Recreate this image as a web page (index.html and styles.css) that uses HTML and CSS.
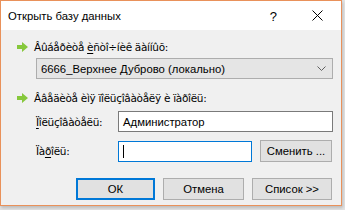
FILE: index.html
```html
<!DOCTYPE html>
<html>
<head>
<meta charset="utf-8">
<link rel="stylesheet" href="styles.css">
</head>
<body>
<div class="window">
  <div class="titlebar">
    <span class="title">Открыть базу данных</span>
    <span class="help">?</span>
    <svg class="close" width="11" height="11" viewBox="0 0 11 11"><path d="M0.5 0.5 L10.5 10.5 M10.5 0.5 L0.5 10.5" stroke="#000" stroke-width="1" fill="none"/></svg>
  </div>
  <div class="content">
    <div class="heading">
      <svg class="arrow" width="11" height="10" viewBox="0 0 11 10"><path d="M0 3 H5 V0 L11 5 L5 10 V7 H0 Z" fill="#86c83c"/></svg>
      <span class="lbl">Âûáåðèòå <u>è</u>ñòî÷íèê äàííûõ:</span>
    </div>
    <div class="combo">
      <span class="combo-text">6666_Верхнее Дуброво (локально)</span>
      <svg class="chev" width="9" height="5" viewBox="0 0 9 5"><path d="M0.5 0.5 L4.5 4.5 L8.5 0.5" stroke="#606060" fill="none"/></svg>
    </div>
    <div class="heading heading2">
      <svg class="arrow" width="11" height="10" viewBox="0 0 11 10"><path d="M0 3 H5 V0 L11 5 L5 10 V7 H0 Z" fill="#86c83c"/></svg>
      <span class="lbl">Ââåäèòå èìÿ ïîëüçîâàòåëÿ è ïàðîëü:</span>
    </div>
    <div class="row row-user">
      <span class="lbl field-lbl"><u>Ï</u>îëüçîâàòåëü:</span>
      <div class="input input-user">Администратор</div>
    </div>
    <div class="row row-pass">
      <span class="lbl field-lbl">Ïà<u>ð</u>îëü:</span>
      <div class="input input-pass"><span class="caret"></span></div>
      <div class="btn btn-change">Сменить ...</div>
    </div>
    <div class="buttons">
      <div class="btn btn-ok">ОК</div>
      <div class="btn btn-cancel">Отмена</div>
      <div class="btn btn-list">Список &gt;&gt;</div>
    </div>
  </div>
</div>
</body>
</html>
```
FILE: styles.css
```css
html, body {
  margin: 0;
  padding: 0;
}
body {
  width: 345px;
  height: 210px;
  background: #e4e4e4;
  overflow: hidden;
}
.window {
  width: 342px;
  height: 206px;
  box-sizing: border-box;
  border: 1px solid #e9915a;
  display: flex;
  flex-direction: column;
  background: #f0f0f0;
  box-shadow: 1px 2px 3px rgba(0,0,0,0.18);
}
.titlebar {
  height: 29px;
  flex: none;
  background: #fff;
  display: flex;
  align-items: center;
  font-family: "Liberation Sans", Arial, sans-serif;
  font-size: 11.3px;
  color: #000;
}
.title {
  padding-left: 7px;
  padding-top: 1px;
  flex: 1;
}
.help {
  font-size: 13px;
  margin-right: 35px;
  padding-top: 1px;
}
.close {
  margin-right: 18px;
  display: block;
}
.content {
  flex: 1;
  padding: 0 8px 0 35px;
  font-family: "Liberation Sans", Arial, sans-serif;
  font-size: 11.3px;
  color: #000;
}
.lbl {
  font-family: "DejaVu Sans", sans-serif;
  font-size: 10.5px;
  letter-spacing: -0.3px;
  white-space: nowrap;
}
.lbl u {
  text-decoration-thickness: 1px;
  text-underline-offset: 2px;
}
.heading {
  display: flex;
  align-items: center;
  height: 14px;
  margin-top: 10px;
  margin-left: -19px;
  gap: 6px;
}
.arrow {
  display: block;
  flex: none;
}
.heading2 {
  margin-top: 12px;
}
.combo {
  margin-top: 4px;
  height: 21px;
  box-sizing: border-box;
  border: 1px solid #adadad;
  background: #e5e5e5;
  display: flex;
  align-items: center;
  padding: 0 6px 0 4px;
}
.combo-text {
  flex: 1;
  white-space: nowrap;
}
.chev {
  display: block;
}
.row {
  display: flex;
  align-items: center;
}
.row-user {
  margin-top: 6px;
}
.row-pass {
  margin-top: 8px;
}
.field-lbl {
  width: 82px;
  flex: none;
}
.input {
  height: 21px;
  box-sizing: border-box;
  background: #fff;
  border: 1px solid #7a7a7a;
  display: flex;
  align-items: center;
  padding-left: 4px;
  white-space: nowrap;
}
.input-user {
  flex: 1;
}
.input-pass {
  width: 134px;
  flex: none;
  border-color: #0078d7;
}
.caret {
  width: 1px;
  height: 13px;
  background: #000;
}
.btn {
  height: 22px;
  box-sizing: border-box;
  border: 1px solid #adadad;
  background: #e1e1e1;
  display: flex;
  align-items: center;
  justify-content: center;
  white-space: nowrap;
}
.btn-change {
  width: 72px;
  margin-left: 8px;
}
.buttons {
  margin-top: 16px;
  display: flex;
  justify-content: flex-end;
  gap: 8px;
  padding-right: 1px;
}
.btn-ok {
  width: 79px;
  border: 2px solid #0078d7;
}
.btn-cancel {
  width: 81px;
}
.btn-list {
  width: 80px;
}
```
